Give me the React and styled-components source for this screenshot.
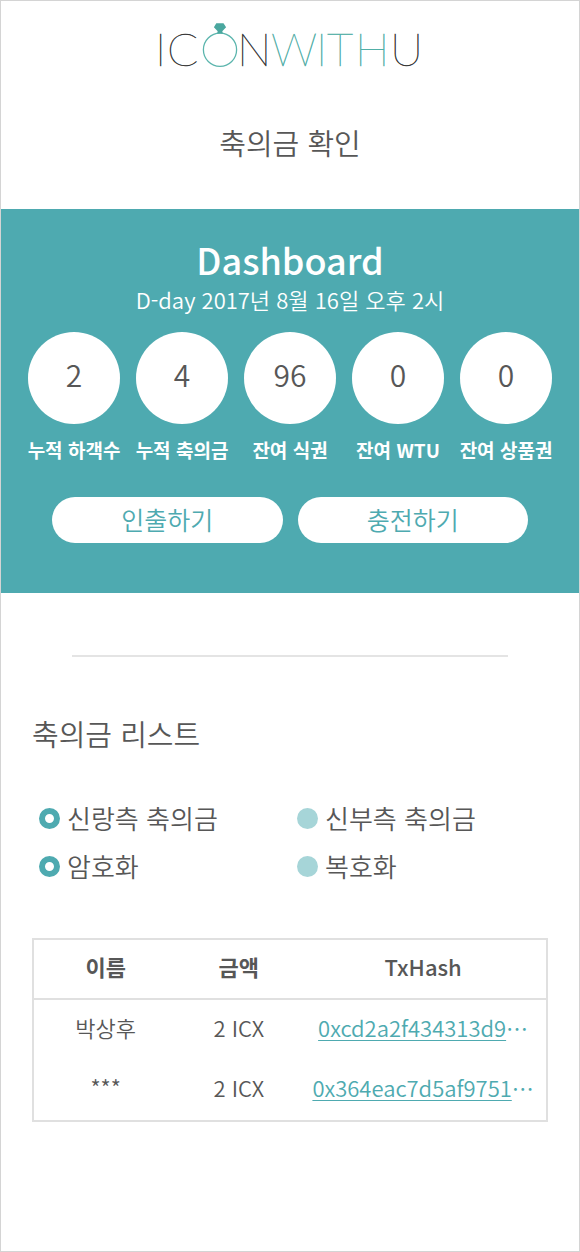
import React, { useState } from "react";
import styled, { createGlobalStyle } from "styled-components";

const teal = "#4eaab0";
const ink = "#575757";
const line = "#e0e0e0";

const GlobalStyle = createGlobalStyle`
  *, *::before, *::after { box-sizing: border-box; }
  body {
    margin: 0;
    background: #fff;
    color: ${ink};
    font-family: "Noto Sans CJK KR", "Noto Sans", sans-serif;
    font-weight: 350;
  }
`;

const Page = styled.div`
  min-height: 100vh;
  border: 1px solid #d4d4d4;
  display: flex;
  flex-direction: column;
`;

const Header = styled.header`
  display: flex;
  flex-direction: column;
  align-items: center;
  padding: 15px 0 44px;
`;

const LogoSvg = styled.svg`
  display: block;
  width: 280px;
  height: 64px;
  font-family: Lato, sans-serif;
  font-weight: 100;
  font-size: 46px;
`;

const LogoLetters = styled.text`
  fill: ${(p) => p.$color};
  stroke: ${(p) => p.$color};
  stroke-width: 0.5px;
  opacity: 0.9;
`;

const PageTitle = styled.h1`
  margin: 39px 0 0;
  font-size: 29px;
  line-height: 46px;
  font-weight: 350;
`;

const Dashboard = styled.section`
  background: ${teal};
  color: #fff;
  padding: 26px 27px 50px;
  text-align: center;
`;

const DashboardTitle = styled.h2`
  margin: 0;
  font-size: 36px;
  line-height: 48px;
  font-weight: 500;
`;

const DashboardDate = styled.p`
  margin: 0 0 16px;
  font-size: 22px;
  line-height: 33px;
`;

const Stats = styled.dl`
  display: grid;
  grid-template-columns: repeat(5, minmax(0, 1fr));
  gap: 16px;
  margin: 0;
`;

const Stat = styled.div`
  display: flex;
  flex-direction: column-reverse;
  align-items: center;
  gap: 12px;
`;

const StatValue = styled.dd`
  display: flex;
  align-items: center;
  justify-content: center;
  width: 100%;
  aspect-ratio: 1;
  margin: 0;
  padding-bottom: 8px;
  border-radius: 50%;
  background: #fff;
  color: ${ink};
  font-size: 30px;
`;

const StatLabel = styled.dt`
  font-size: 19px;
  line-height: 28px;
  font-weight: 700;
  white-space: nowrap;
`;

const Actions = styled.div`
  display: grid;
  grid-template-columns: 1fr 1fr;
  gap: 15px;
  margin-top: 33px;
  padding: 0 24px;
`;

const ActionButton = styled.button`
  height: 46px;
  padding: 0 0 2px;
  border: 0;
  border-radius: 23px;
  background: #fff;
  color: ${teal};
  font: inherit;
  font-size: 25px;
  line-height: 44px;
`;

const Divider = styled.hr`
  width: calc(100% - 142px);
  height: 2px;
  margin: 62px auto 0;
  border: 0;
  background: #e4e4e4;
`;

const ListSection = styled.section`
  padding: 53px 31px 0;
`;

const ListTitle = styled.h2`
  margin: 0 0 38px;
  font-size: 29px;
  line-height: 46px;
  font-weight: 350;
`;

const Options = styled.form`
  display: flex;
  flex-direction: column;
`;

const OptionRow = styled.div`
  display: grid;
  grid-template-columns: 1fr 1fr;
`;

const Option = styled.label`
  display: flex;
  align-items: center;
  gap: 7px;
  height: 48px;
  padding-left: 7px;
  font-size: 26px;
`;

const OptionText = styled.span`
  padding-bottom: 2px;
`;

const Radio = styled.input`
  appearance: none;
  flex: none;
  width: 21px;
  height: 21px;
  margin: 0;
  border-radius: 50%;
  background: #a6d5d8;

  &:checked {
    border: 6px solid ${teal};
    background: #fff;
  }
`;

const Table = styled.table`
  width: 100%;
  margin-top: 48px;
  border: 2px solid ${line};
  border-spacing: 0;
  table-layout: fixed;
  font-size: 22px;
  text-align: center;
`;

const HeadCell = styled.th`
  width: ${(p) => p.$width};
  height: 60px;
  padding: 0 0 6px;
  border-bottom: 2px solid ${line};
  font-weight: ${(p) => p.$weight};
`;

const Cell = styled.td`
  height: 60px;
  padding: 0 0 6px;
  white-space: nowrap;
`;

const HashLink = styled.a`
  color: ${teal};
  text-decoration: none;
`;

const HashText = styled.span`
  text-decoration: underline;
  text-decoration-thickness: 1px;
  text-underline-offset: 3px;
`;

const stats = [
  ["누적 하객수", "2"],
  ["누적 축의금", "4"],
  ["잔여 식권", "96"],
  ["잔여 WTU", "0"],
  ["잔여 상품권", "0"],
];

const optionGroups = [
  { name: "side", options: ["신랑측 축의금", "신부측 축의금"] },
  { name: "cipher", options: ["암호화", "복호화"] },
];

const rows = [
  { name: "박상후", amount: "2 ICX", hash: "0xcd2a2f434313d9" },
  { name: "***", amount: "2 ICX", hash: "0x364eac7d5af9751" },
];

function Logo() {
  return (
    <LogoSvg viewBox="150 16 280 64" role="img" aria-label="ICONWITHU">
      <LogoLetters $color="#222" x="155 167" y="66">IC</LogoLetters>
      <LogoLetters $color="#222" x="237" y="66">N</LogoLetters>
      <LogoLetters $color="#3fa79e" x="271 316 327 355" y="66">WITH</LogoLetters>
      <LogoLetters $color="#222" x="390" y="66">U</LogoLetters>
      <circle cx="220" cy="49.7" r="16.6" fill="none" stroke="#5bb5ad" strokeWidth="1.3" />
      <path d="M216.3 23.3h7.2l2.6 4-3.8 4 .6 2.2h-5.8l.6-2.2-3.8-4z" fill="#4aa79f" />
    </LogoSvg>
  );
}

export default function App() {
  const [selected, setSelected] = useState({ side: "신랑측 축의금", cipher: "암호화" });

  return (
    <>
      <GlobalStyle />
      <Page lang="ko">
        <Header>
          <Logo />
          <PageTitle>축의금 확인</PageTitle>
        </Header>

        <Dashboard>
          <DashboardTitle>Dashboard</DashboardTitle>
          <DashboardDate>D-day 2017년 8월 16일 오후 2시</DashboardDate>
          <Stats>
            {stats.map(([label, value]) => (
              <Stat key={label}>
                <StatLabel>{label}</StatLabel>
                <StatValue>{value}</StatValue>
              </Stat>
            ))}
          </Stats>
          <Actions>
            <ActionButton type="button">인출하기</ActionButton>
            <ActionButton type="button">충전하기</ActionButton>
          </Actions>
        </Dashboard>

        <Divider />

        <ListSection>
          <ListTitle>축의금 리스트</ListTitle>
          <Options>
            {optionGroups.map(({ name, options }) => (
              <OptionRow key={name} role="radiogroup">
                {options.map((option) => (
                  <Option key={option}>
                    <Radio
                      type="radio"
                      name={name}
                      checked={selected[name] === option}
                      onChange={() => setSelected({ ...selected, [name]: option })}
                    />
                    <OptionText>{option}</OptionText>
                  </Option>
                ))}
              </OptionRow>
            ))}
          </Options>
          <Table>
            <thead>
              <tr>
                <HeadCell $width="28%" $weight={700}>이름</HeadCell>
                <HeadCell $width="24%" $weight={700}>금액</HeadCell>
                <HeadCell $width="48%" $weight={500}>TxHash</HeadCell>
              </tr>
            </thead>
            <tbody>
              {rows.map(({ name, amount, hash }) => (
                <tr key={hash}>
                  <Cell>{name}</Cell>
                  <Cell>{amount}</Cell>
                  <Cell>
                    <HashLink href={`#${hash}`}>
                      <HashText>{hash}</HashText>⋯
                    </HashLink>
                  </Cell>
                </tr>
              ))}
            </tbody>
          </Table>
        </ListSection>
      </Page>
    </>
  );
}
